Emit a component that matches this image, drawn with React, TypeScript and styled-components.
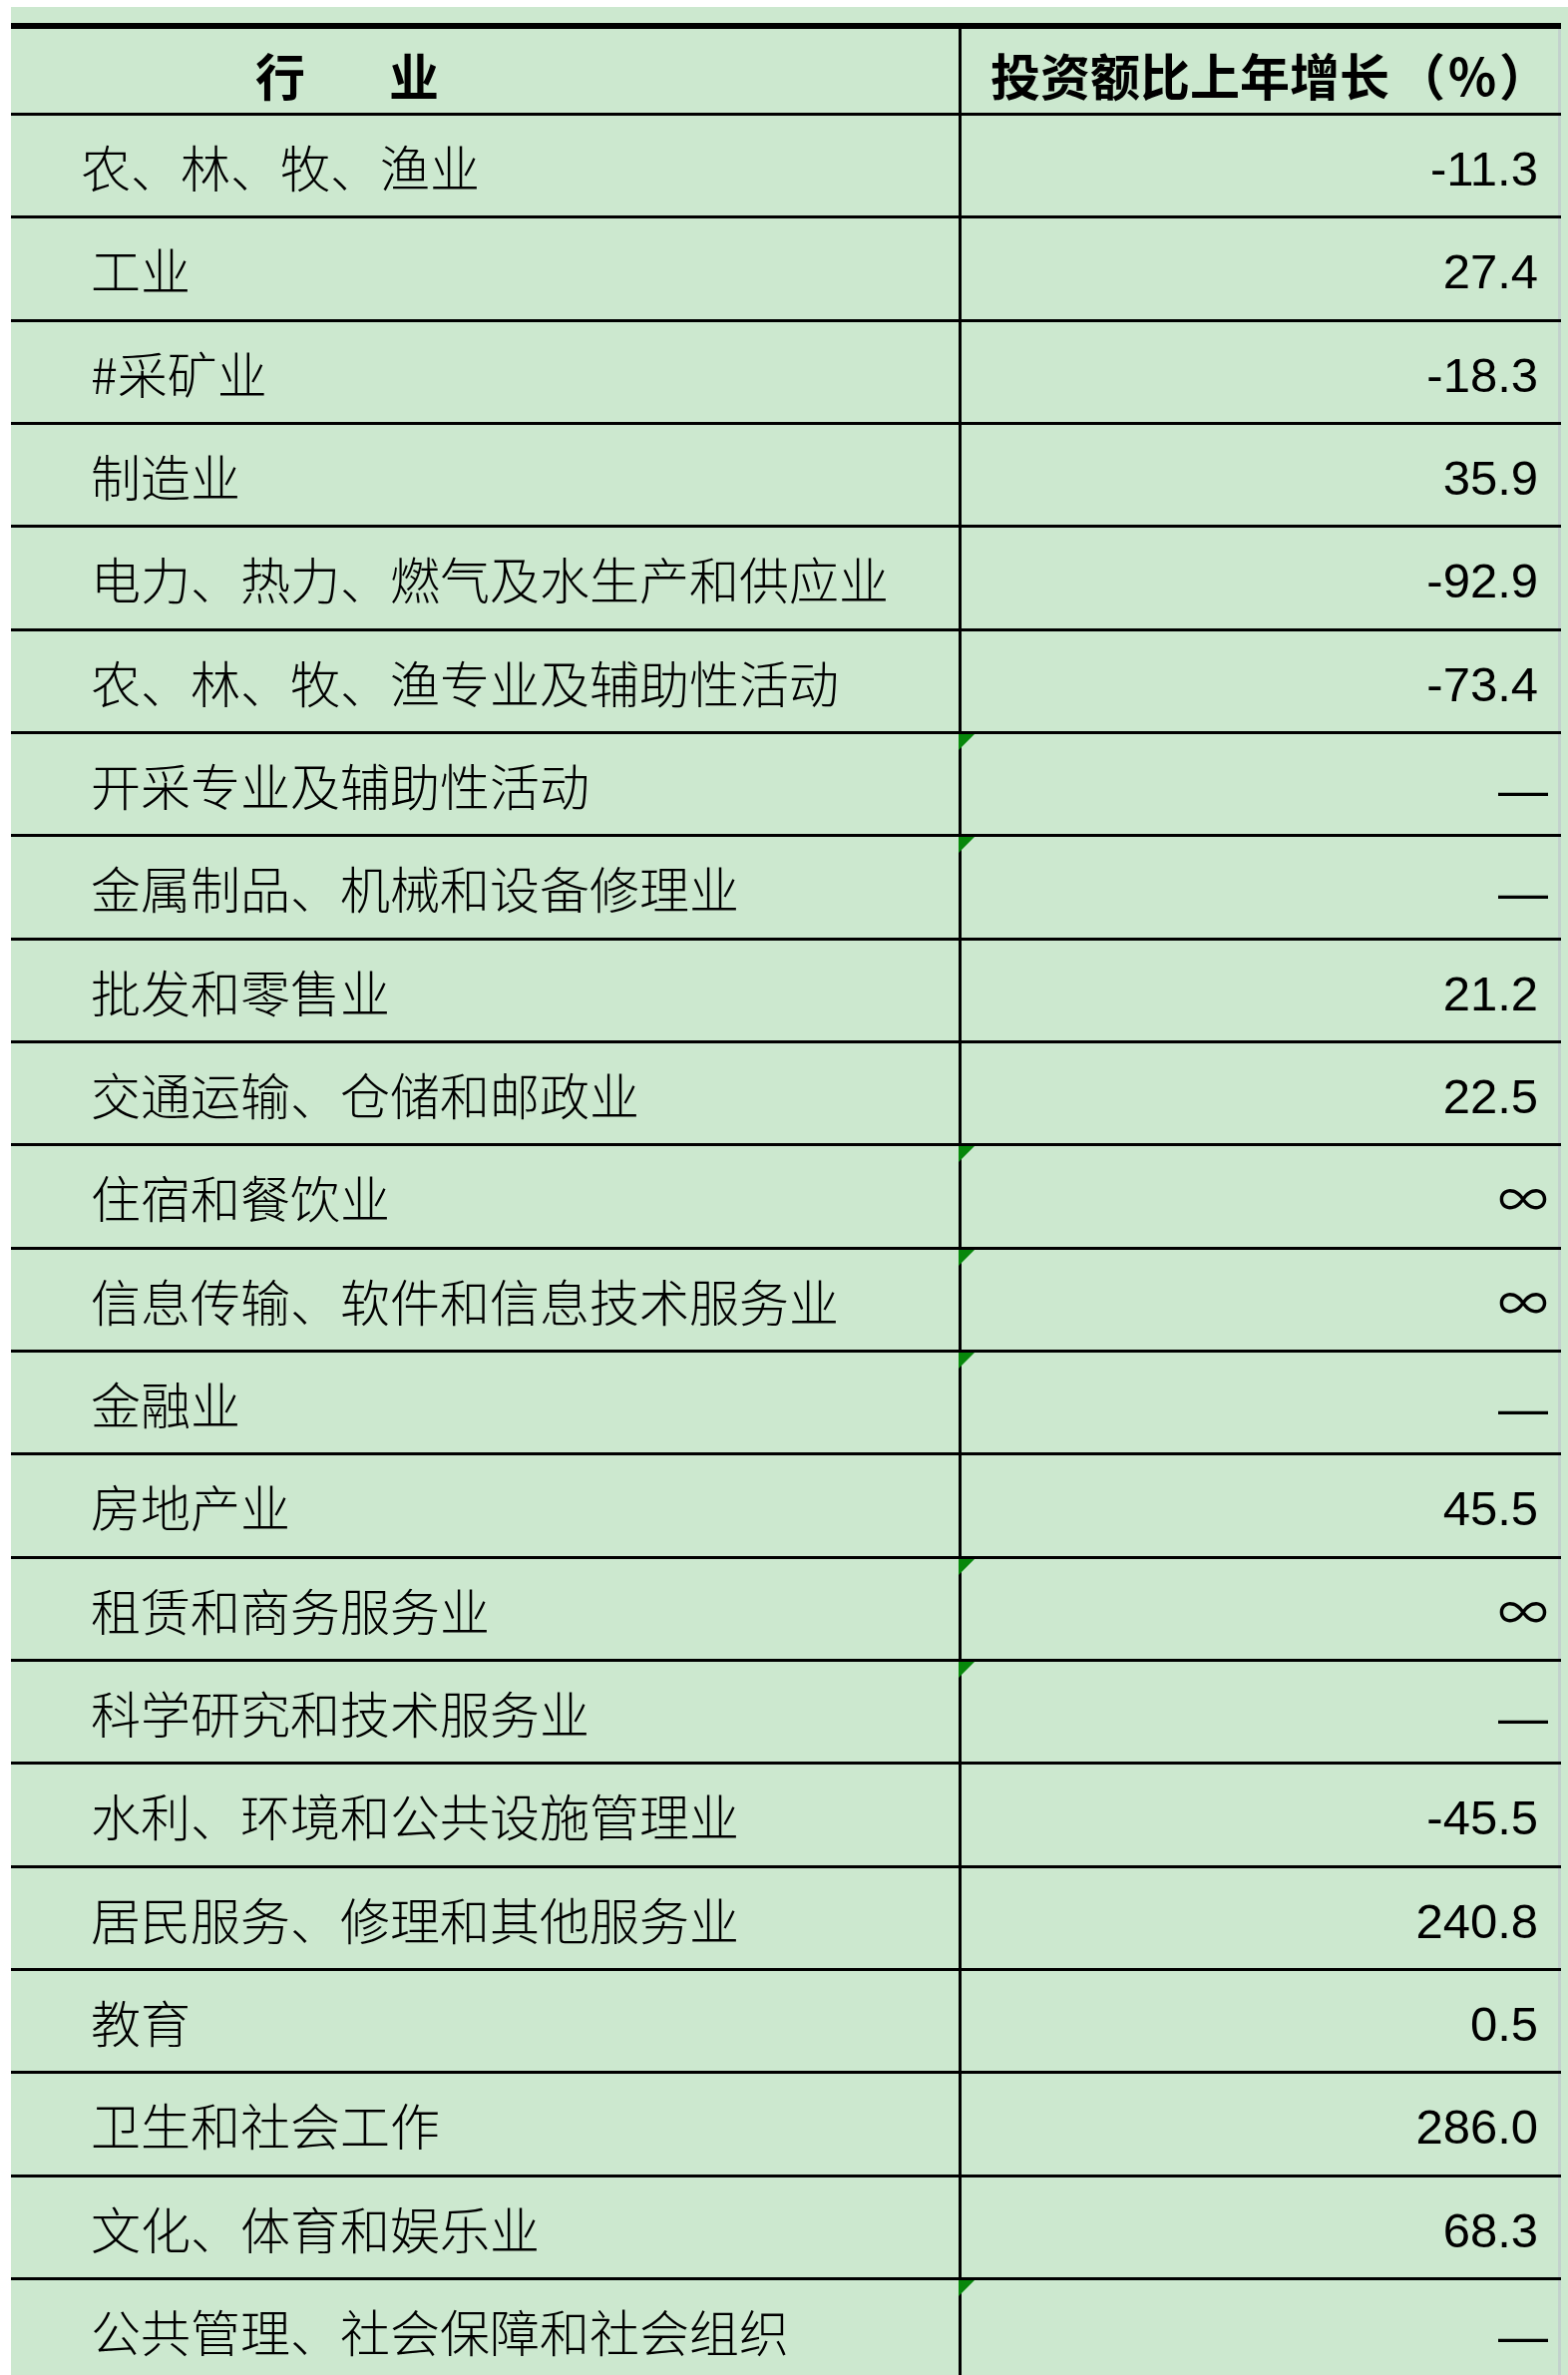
import React from 'react';
import styled, { createGlobalStyle } from 'styled-components';

type Row = { name: string; value: string; indent?: number };

const rows: Row[] = [
  { name: '农、林、牧、渔业', value: '-11.3', indent: 70 },
  { name: '工业', value: '27.4' },
  { name: '#采矿业', value: '-18.3' },
  { name: '制造业', value: '35.9' },
  { name: '电力、热力、燃气及水生产和供应业', value: '-92.9' },
  { name: '农、林、牧、渔专业及辅助性活动', value: '-73.4' },
  { name: '开采专业及辅助性活动', value: '—' },
  { name: '金属制品、机械和设备修理业', value: '—' },
  { name: '批发和零售业', value: '21.2' },
  { name: '交通运输、仓储和邮政业', value: '22.5' },
  { name: '住宿和餐饮业', value: '∞' },
  { name: '信息传输、软件和信息技术服务业', value: '∞' },
  { name: '金融业', value: '—' },
  { name: '房地产业', value: '45.5' },
  { name: '租赁和商务服务业', value: '∞' },
  { name: '科学研究和技术服务业', value: '—' },
  { name: '水利、环境和公共设施管理业', value: '-45.5' },
  { name: '居民服务、修理和其他服务业', value: '240.8' },
  { name: '教育', value: '0.5' },
  { name: '卫生和社会工作', value: '286.0' },
  { name: '文化、体育和娱乐业', value: '68.3' },
  { name: '公共管理、社会保障和社会组织', value: '—' },
];

const isText = (v: string) => v === '—' || v === '∞';

const App = () => {
  return (
    <Page>
      <GlobalStyle />
      <Sheet>
        <Table>
          <HeaderRow>
            <HeaderLabel>
              <span>行</span>
              <HeaderGap>业</HeaderGap>
            </HeaderLabel>
            <HeaderValue>
              投资额比上年增长<Unit>（％）</Unit>
            </HeaderValue>
          </HeaderRow>
          {rows.map((row) => (
            <DataRow key={row.name}>
              <LabelCell $indent={row.indent ?? 80}>{row.name}</LabelCell>
              <ValueCell $flag={isText(row.value)}>
                {row.value === '—' && <Dash>—</Dash>}
                {row.value === '∞' && <Infinity>∞</Infinity>}
                {!isText(row.value) && <Num>{row.value}</Num>}
              </ValueCell>
            </DataRow>
          ))}
        </Table>
      </Sheet>
    </Page>
  );
};

export default App;

const GlobalStyle = createGlobalStyle`
  body {
    margin: 0;
    background: #ffffff;
  }
`;

const Page = styled.div`
  width: 1572px;
  height: 2381px;
  overflow: hidden;
  padding: 7px 0 0 11px;
  box-sizing: border-box;
  background: #ffffff;
`;

const Sheet = styled.div`
  background: #cce8cf;
  padding-top: 16px;
  min-height: 2374px;
`;

const Table = styled.div`
  width: 1554px;
  border-top: 6px solid #000;
  font-family: 'Noto Sans CJK SC', 'Liberation Sans', sans-serif;
  color: #000;
`;

const HeaderRow = styled.div`
  display: grid;
  grid-template-columns: 953px 601px;
  height: 84px;
`;

const HeaderLabel = styled.div`
  display: flex;
  align-items: center;
  padding: 6px 0 0 245px;
  border-right: 3px solid #000;
  font-size: 50px;
  font-weight: 700;
`;

const HeaderGap = styled.span`
  margin-left: 84px;
`;

const HeaderValue = styled.div`
  display: flex;
  align-items: center;
  padding: 6px 0 0 29px;
  border-right: 3px solid #c3d1cd;
  font-size: 50px;
  font-weight: 700;
  white-space: nowrap;
`;

const Unit = styled.span`
  margin-left: 6px;
  letter-spacing: 2px;
`;

const DataRow = styled.div`
  display: grid;
  grid-template-columns: 953px 601px;
  height: 103.333px;
  box-sizing: border-box;
  border-top: 3px solid #000;
`;

const LabelCell = styled.div<{ $indent: number }>`
  display: flex;
  align-items: center;
  padding-left: ${(p) => p.$indent}px;
  border-right: 3px solid #000;
  font-size: 50px;
  font-weight: 300;
  white-space: nowrap;
`;

const ValueCell = styled.div<{ $flag: boolean }>`
  position: relative;
  display: flex;
  align-items: center;
  justify-content: flex-end;
  padding-right: ${(p) => (p.$flag ? 10 : 20)}px;
  border-right: 3px solid #c3d1cd;

  &::before {
    content: '';
    display: ${(p) => (p.$flag ? 'block' : 'none')};
    position: absolute;
    top: 0;
    left: -3px;
    border-top: 16px solid #07870b;
    border-right: 16px solid transparent;
  }
`;

const Num = styled.span`
  font-family: 'Liberation Sans', Arial, sans-serif;
  font-size: 49px;
  padding-top: 6px;
`;

const Dash = styled.span`
  font-family: 'Liberation Sans', Arial, sans-serif;
  font-size: 50px;
  padding-top: 12px;
`;

const Infinity = styled.span`
  font-family: 'Noto Sans CJK SC', sans-serif;
  font-size: 50px;
`;
